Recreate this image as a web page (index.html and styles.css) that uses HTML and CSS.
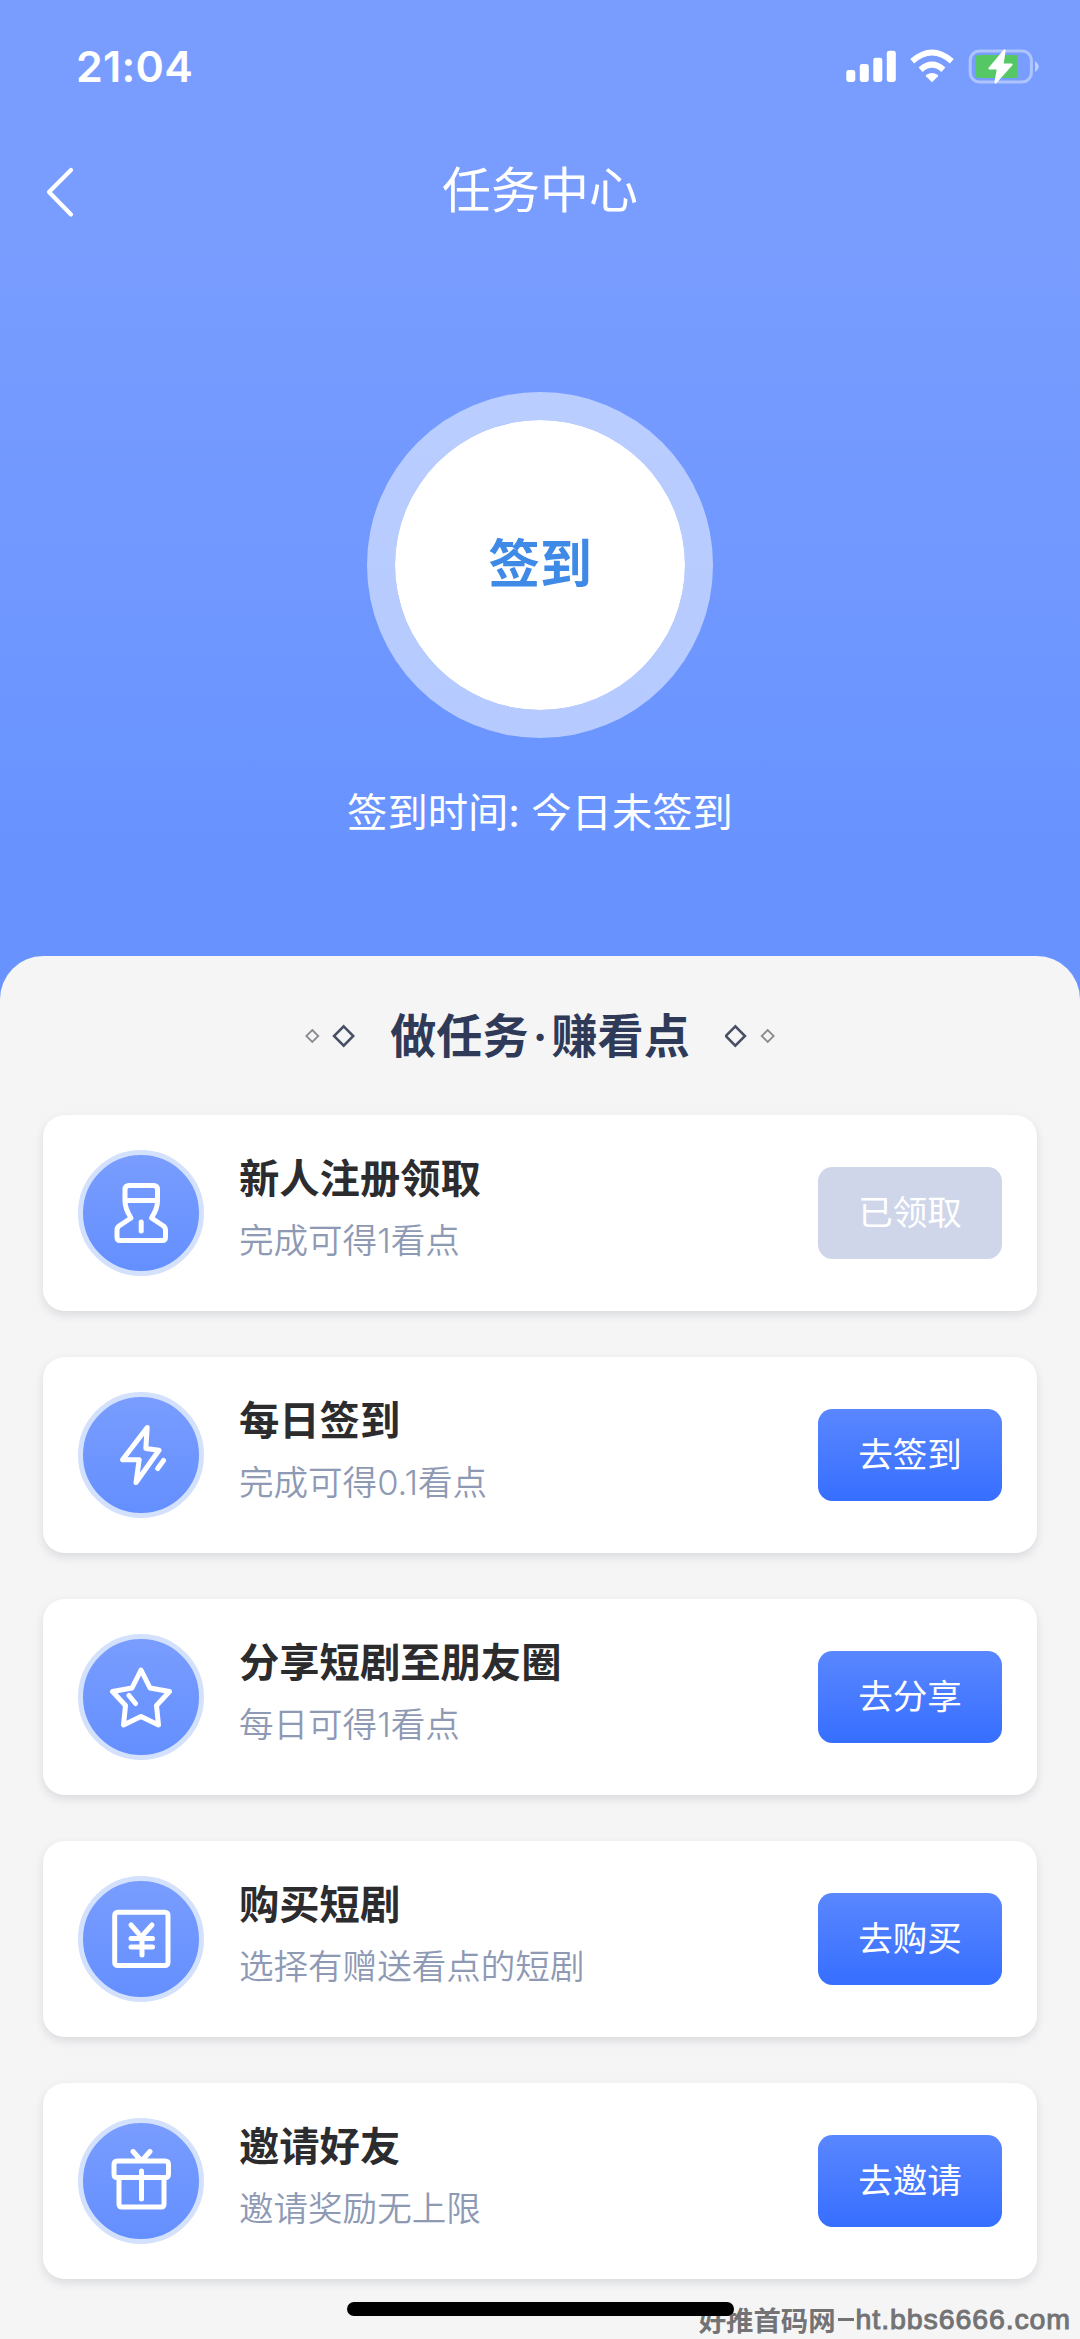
FILE: index.html
```html
<!DOCTYPE html>
<html lang="zh-CN">
<head>
<meta charset="utf-8">
<title>任务中心</title>
<link rel="stylesheet" href="styles.css">
</head>
<body>
<div class="screen">
  <header class="statusbar">
    <span class="clock">21:04</span>
    <svg class="status-icons" viewBox="0 0 196 40" width="196" height="40">
      <g fill="#fff">
        <rect x="0.3" y="24" width="9" height="12" rx="2.4"/>
        <rect x="13.8" y="18" width="9" height="18" rx="2.4"/>
        <rect x="27.3" y="11.7" width="9" height="24.3" rx="2.4"/>
        <rect x="40.8" y="4.8" width="9" height="31.2" rx="2.4"/>
        <path d="M86 36.2 L80 30.2 Q79.6 29.4 80.4 28.8 Q86 25 91.6 28.8 Q92.4 29.4 92 30.2 Z"/>
      </g>
      <g fill="none" stroke="#fff" stroke-width="6">
        <path d="M66.2 15.2 Q86 -2.2 105.8 15.2"/>
        <path d="M74.6 23.7 Q86 13.6 97.4 23.7"/>
      </g>
      <rect x="124.2" y="5" width="61.2" height="31" rx="9.5" fill="none" stroke="#fff" stroke-opacity=".4" stroke-width="3"/>
      <path d="M189 15 Q196.500 20.500 189 26 Z" fill="#fff" fill-opacity=".5"/>
      <path d="M133 9 H171 V32 H133 Q129.500 32 129.500 28.500 V12.500 Q129.500 9 133 9 Z" fill="#55c865"/>
      <path d="M158.500 4.500 L143.500 22.500 H152 L149.500 36.500 L165.500 18.500 H156.500 Z" fill="#fff" stroke="#fff" stroke-width="2.200" stroke-linejoin="round"/>
    </svg>
  </header>
  <nav class="navbar">
    <svg class="back" viewBox="0 0 32 54" width="32" height="54"><path d="M28 5 L6 27 L28 49.500" fill="none" stroke="#fff" stroke-width="4.200" stroke-linecap="round" stroke-linejoin="round"/></svg>
    <h1 class="nav-title">任务中心</h1>
  </nav>
  <section class="checkin">
    <button class="checkin-button">签到</button>
    <p class="checkin-time">签到时间: 今日未签到</p>
  </section>
  <main class="panel">
    <div class="panel-head">
      <svg class="diamonds" viewBox="0 0 50 28" width="50" height="28" fill="none"><path d="M7.300 8 L13.300 14 L7.300 20 L1.300 14 Z" stroke="#8b8c90" stroke-width="1.800"/><path d="M38.700 4.300 L48.300 14 L38.700 23.700 L29 14 Z" stroke="#474f63" stroke-width="2.500"/></svg>
      <h2 class="panel-title">做任务<span class="dot">·</span>赚看点</h2>
      <svg class="diamonds flipped" viewBox="0 0 50 28" width="50" height="28" fill="none"><path d="M7.300 8 L13.300 14 L7.300 20 L1.300 14 Z" stroke="#8b8c90" stroke-width="1.800"/><path d="M39.700 4.300 L49.300 14 L39.700 23.700 L30 14 Z" stroke="#474f63" stroke-width="2.500"/></svg>
    </div>
    <ul class="tasks">
      <li class="task">
        <span class="task-icon"><svg viewBox="0 0 64 64"><path d="M20 4.500 H44.500 Q48.500 4.500 48.500 8.500 V20 Q48.500 27.500 42.500 37 L54.500 45 Q56.500 46.500 56.500 49 V56 Q56.500 59.500 53.500 59.500 H11 Q8 59.500 8 56 V49 Q8 46.500 10 45 L22 37 Q16 27.500 16 20 V8.500 Q16 4.500 20 4.500 Z M17 19.500 H47.500 M32.200 41 V50"/></svg></span>
        <div class="task-text"><h3>新人注册领取</h3><p>完成可得1看点</p></div>
        <button class="action done">已领取</button>
      </li>
      <li class="task">
        <span class="task-icon"><svg viewBox="0 0 64 64"><path d="M38.200 4.500 L13.500 36.700 H30.200 L27 59.500 L50 27.200 L36.800 25.500 Z M54.500 37.500 L48.700 45.500"/></svg></span>
        <div class="task-text"><h3>每日签到</h3><p>完成可得0.1看点</p></div>
        <button class="action">去签到</button>
      </li>
      <li class="task">
        <span class="task-icon"><svg viewBox="0 0 64 64"><path d="M32 5 L41 23 L60.500 26.500 L47.500 40.500 L49.500 60 L32 51.500 L14.500 60 L16.500 40.500 L3.500 26.500 L23 23 Z M20 30.500 L26.500 38.500"/></svg></span>
        <div class="task-text"><h3>分享短剧至朋友圈</h3><p>每日可得1看点</p></div>
        <button class="action">去分享</button>
      </li>
      <li class="task">
        <span class="task-icon"><svg viewBox="0 0 64 64"><rect x="5.700" y="5.200" width="53.300" height="53.300" rx="3"/><path d="M22 18 L29.500 26.500 M43 18 L33 29 V48 M22 31.500 H43.500 M22 40 H43.500"/></svg></span>
        <div class="task-text"><h3>购买短剧</h3><p>选择有赠送看点的短剧</p></div>
        <button class="action">去购买</button>
      </li>
      <li class="task">
        <span class="task-icon"><svg viewBox="0 0 64 64"><path d="M8 28.500 Q5 28.500 5 25 V15.500 Q5 12 8.500 12 H56 Q59.500 12 59.500 15.500 V25 Q59.500 28.500 56.500 28.500 Z M10 28.500 V55 Q10 58 13 58 H52 Q55 58 55 55 V28.500 M32.500 22 V50 M24 2.500 L32.500 12 L41 2.500"/></svg></span>
        <div class="task-text"><h3>邀请好友</h3><p>邀请奖励无上限</p></div>
        <button class="action">去邀请</button>
      </li>
    </ul>
  </main>
  <div class="watermark">好推首码网<span class="dash"></span><span class="domain">ht.bbs6666.com</span></div>
  <div class="home-indicator"></div>
</div>
</body>
</html>
```
FILE: styles.css
```css
* { box-sizing: border-box; }

body, h1, h2, h3, p, ul { margin: 0; padding: 0; }

body {
  width: 1080px;
  font-family: Inter, "Noto Sans CJK SC", sans-serif;
  background: #f5f5f6;
}

.screen {
  position: relative;
  display: flex;
  flex-direction: column;
  height: 2339px;
  overflow: hidden;
  background: linear-gradient(#799dff 0, #799dff 240px, #6893ff 860px);
}

.statusbar {
  display: flex;
  align-items: center;
  justify-content: space-between;
  height: 132px;
  padding: 0 38px 0 76px;
}

.clock {
  color: #fff;
  font-size: 43px;
  font-weight: 600;
  letter-spacing: .3px;
  line-height: 60px;
}

.navbar {
  display: grid;
  grid-template-columns: 1fr auto 1fr;
  align-items: center;
  height: 120px;
  padding: 0 43px;
}

.nav-title {
  margin-bottom: 3px;
  color: #fff;
  font-size: 48.96px;
  font-weight: 380;
  line-height: 70px;
}

.checkin {
  display: flex;
  flex-direction: column;
  align-items: center;
  height: 704px;
  padding-top: 140px;
}

.checkin-button {
  width: 345.6px;
  height: 345.6px;
  padding: 0;
  border: 28.8px solid rgba(255, 255, 255, .5);
  border-radius: 50%;
  background: #fff;
  background-clip: padding-box;
  color: #3f8ae6;
  font: 600 51.84px/72px Inter, "Noto Sans CJK SC", sans-serif;
}

.checkin-time {
  margin-top: 47.5px;
  color: #fff;
  font-size: 40.32px;
  font-weight: 380;
  line-height: 56px;
}

.panel {
  flex: 1;
  border-radius: 43.2px 43.2px 0 0;
  background: #f5f5f6;
}

.panel-head {
  display: flex;
  align-items: center;
  justify-content: center;
  gap: 35px;
  height: 159px;
}

.panel-title {
  color: #2f3a58;
  font-size: 46.08px;
  font-weight: 620;
  line-height: 66px;
}

.dot {
  display: inline-block;
  width: 23px;
  text-align: center;
}

.flipped { transform: scaleX(-1); }

.tasks {
  display: flex;
  flex-direction: column;
  gap: 46.2px;
  padding: 0 43.2px;
  list-style: none;
}

.task {
  display: flex;
  align-items: center;
  height: 195.84px;
  padding: 0 34.56px;
  border-radius: 21.6px;
  background: #fff;
  box-shadow: 0 4px 10px rgba(40, 44, 60, .13);
}

.task-icon {
  display: grid;
  place-items: center;
  width: 126.7px;
  height: 126.7px;
  border: 5.76px solid #d3e1fd;
  border-radius: 50%;
  background: linear-gradient(#799dff, #648fff);
}

.task-icon svg {
  width: 64px;
  height: 64px;
  fill: none;
  stroke: #fff;
  stroke-width: 5;
  stroke-linecap: round;
  stroke-linejoin: round;
}

.task-text {
  flex: 1;
  margin-left: 34.56px;
  padding-bottom: 5px;
}

.task-text h3 {
  color: #2c2c2e;
  font-size: 40.32px;
  font-weight: 600;
  line-height: 62px;
}

.task-text p {
  color: #8e99b4;
  font-size: 34.56px;
  font-weight: 360;
  line-height: 62px;
}

.action {
  width: 184.32px;
  height: 92.16px;
  padding: 0;
  border: 0;
  border-radius: 14.4px;
  background: linear-gradient(#5a87ff, #366eff);
  color: #fff;
  font: 380 34.56px/50px Inter, "Noto Sans CJK SC", sans-serif;
}

.action.done { background: #cfd6ea; }

.watermark {
  position: absolute;
  right: 9px;
  bottom: 0;
  display: flex;
  align-items: center;
  height: 39px;
  color: #737375;
  font: 700 27.4px/39px "Noto Sans CJK SC", sans-serif;
}

.dash {
  width: 16px;
  height: 3px;
  margin: 0 2px;
  background: #737375;
}

.domain {
  font-family: "Liberation Sans", sans-serif;
  font-size: 28.5px;
  font-weight: 400;
  letter-spacing: .9px;
  -webkit-text-stroke: 1px #737375;
}

.home-indicator {
  position: absolute;
  left: 347px;
  bottom: 23px;
  width: 387px;
  height: 14px;
  border-radius: 7px;
  background: #000;
}
```
